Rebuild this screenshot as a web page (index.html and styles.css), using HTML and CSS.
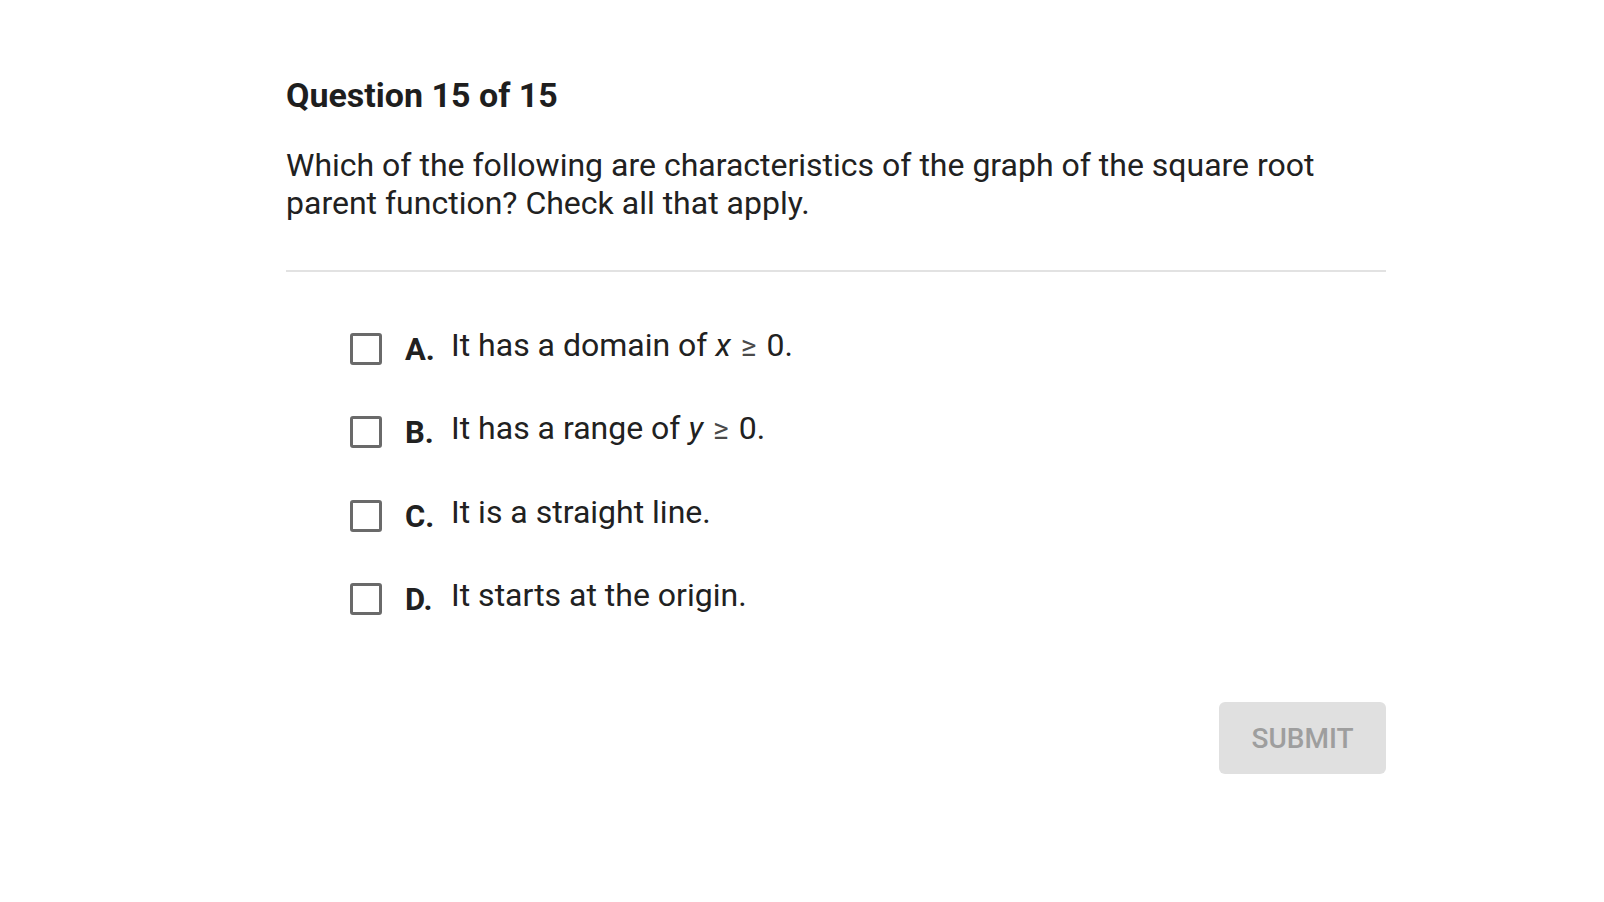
FILE: index.html
```html
<!DOCTYPE html>
<html>
<head>
<meta charset="utf-8">
<link rel="stylesheet" href="styles.css">
</head>
<body>
<main class="quiz">
  <h1 class="title">Question 15 of 15</h1>
  <p class="prompt">Which of the following are characteristics of the graph of the square root parent function? Check all that apply.</p>
  <hr class="divider">
  <ul class="options">
    <li class="option"><span class="box"></span><span class="letter">A.</span><span class="text">It has a domain of <i class="var">x</i> <span class="ge">≥</span> 0.</span></li>
    <li class="option"><span class="box"></span><span class="letter">B.</span><span class="text">It has a range of <i class="var">y</i> <span class="ge">≥</span> 0.</span></li>
    <li class="option"><span class="box"></span><span class="letter">C.</span><span class="text">It is a straight line.</span></li>
    <li class="option"><span class="box"></span><span class="letter">D.</span><span class="text">It starts at the origin.</span></li>
  </ul>
  <div class="actions"><button class="submit">SUBMIT</button></div>
</main>
</body>
</html>
```
FILE: styles.css
```css
html, body { margin: 0; padding: 0; background: #fff; }
body { font-family: Roboto, "Noto Sans", sans-serif; color: #212121; }
.quiz { width: 1100px; margin-left: 286px; padding-top: 75px; }
.title { font-size: 34px; font-weight: 700; margin: 0; line-height: 40px; color: #1e1e1e; }
.prompt { font-size: 32px; line-height: 38px; margin: 31px 0 0; }
.divider { border: 0; height: 2px; background: #e2e2e2; margin: 48px 0 0; }
.options { list-style: none; margin: 0; padding: 53px 0 0 64px; display: flex; flex-direction: column; gap: 43.4px; }
.option { display: flex; align-items: flex-start; height: 40px; }
.box { width: 26px; height: 26px; border: 3px solid #6a6a6a; border-radius: 3px; flex: none; margin: 8px 23px 0 0; }
.letter { font-weight: 700; width: 46px; flex: none; font-size: 31px; line-height: 40px; margin-top: 5px; }
.text { font-size: 32px; line-height: 40px; white-space: nowrap; }
.var { font-style: italic; }
.ge { font-size: 30px; color: #4a4a4a; margin: 0 2px; }
.actions { display: flex; justify-content: flex-end; margin-top: 87px; }
.submit { width: 167px; height: 72px; background: #e0e0e0; border: 0; border-radius: 6px; color: #9e9e9e; font-family: Roboto, sans-serif; font-weight: 500; font-size: 28px; padding: 0; }
```
